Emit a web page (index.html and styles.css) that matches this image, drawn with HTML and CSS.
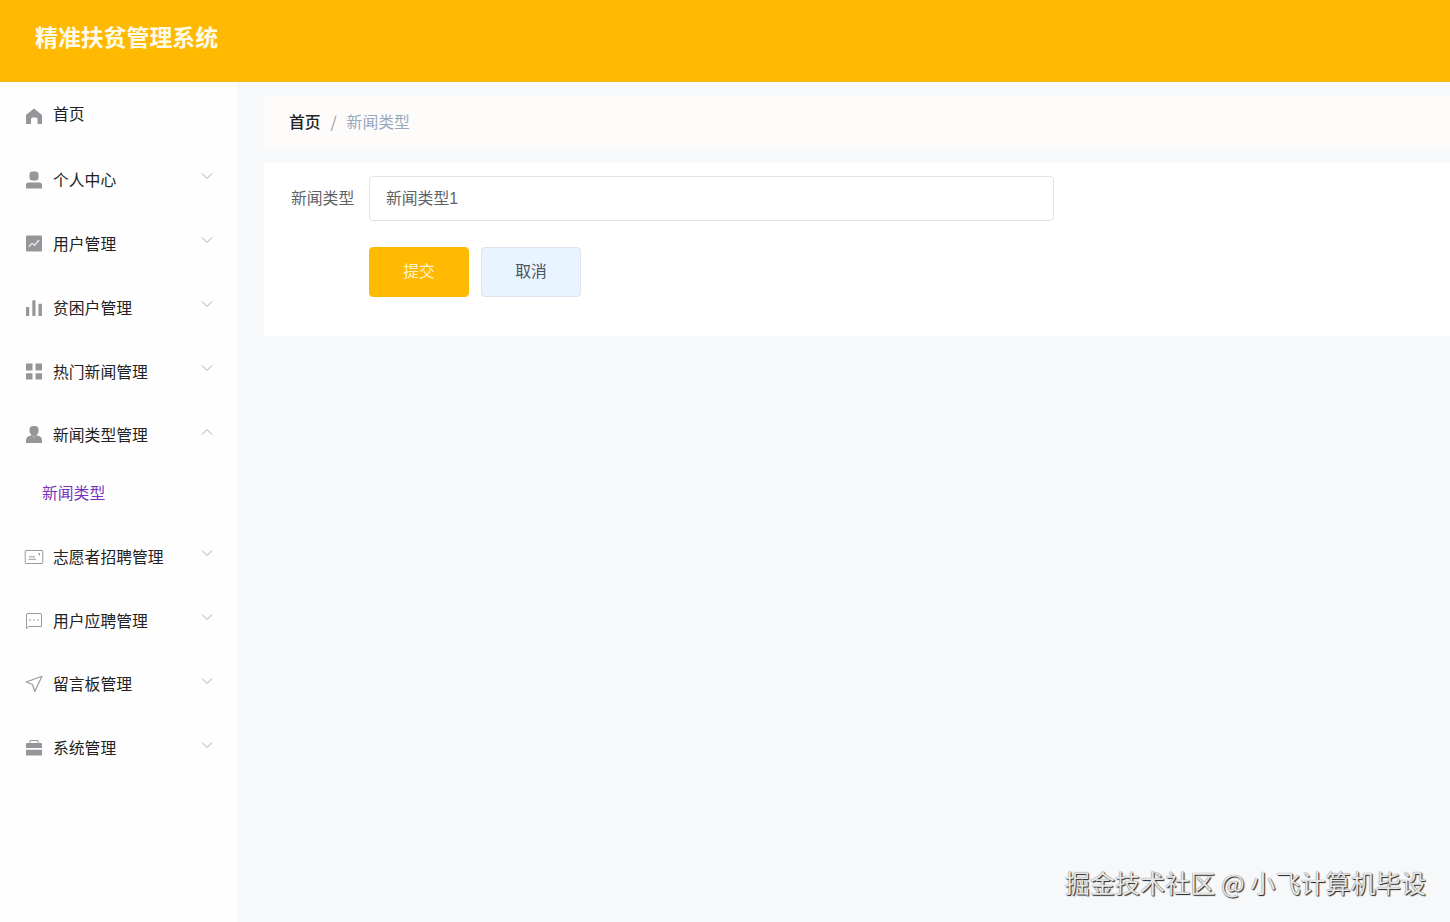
FILE: index.html
```html
<!DOCTYPE html>
<html lang="zh-CN">
<head>
<meta charset="utf-8">
<title>精准扶贫管理系统</title>
<link rel="stylesheet" href="styles.css">
</head>
<body>
<div class="app">
  <header class="topbar"><h1 class="brand">精准扶贫管理系统</h1></header>
  <div class="body">
    <nav class="sidebar">
      <div class="item home">
        <svg class="icon" viewBox="0 0 20 20"><path class="fill" d="M10 2.500 18 9V18H13.500V13Q13.500 11.500 12 11.500H8.500Q7 11.500 7 13V18H2V9Z"/></svg>
        <span class="label">首页</span>
      </div>
      <div class="item">
        <svg class="icon" viewBox="0 0 20 20"><rect class="fill" x="5.500" y="1.500" width="9" height="9" rx="3"/><path class="fill" d="M2 18.500V15Q2 12.500 4.500 12.500H15.500Q18 12.500 18 15V18.500Z"/></svg>
        <span class="label">个人中心</span>
        <svg class="arrow" viewBox="0 0 12 8"><path d="M1 1.500 6 6.500 11 1.500"/></svg>
      </div>
      <div class="item">
        <svg class="icon" viewBox="0 0 20 20"><rect class="fill" x="2" y="1.500" width="16" height="16" rx="1"/><path class="cut" d="M4.800 12.800 8 9.300 10.500 11.300 15.200 6"/></svg>
        <span class="label">用户管理</span>
        <svg class="arrow" viewBox="0 0 12 8"><path d="M1 1.500 6 6.500 11 1.500"/></svg>
      </div>
      <div class="item">
        <svg class="icon" viewBox="0 0 20 20"><rect class="fill" x="2" y="9" width="3.200" height="9" rx=".5"/><rect class="fill" x="8.300" y="2.200" width="3.200" height="15.800" rx=".5"/><rect class="fill" x="14.500" y="5.800" width="3.400" height="12.200" rx=".5"/></svg>
        <span class="label">贫困户管理</span>
        <svg class="arrow" viewBox="0 0 12 8"><path d="M1 1.500 6 6.500 11 1.500"/></svg>
      </div>
      <div class="item">
        <svg class="icon" viewBox="0 0 20 20"><path class="fill" d="M2 1.500H8.500V8.500H2ZM11.500 1.500H18V8.500H11.500ZM2 11.200H8.500V17.500H2ZM11.500 11.200H18V17.500H11.500Z"/></svg>
        <span class="label">热门新闻管理</span>
        <svg class="arrow" viewBox="0 0 12 8"><path d="M1 1.500 6 6.500 11 1.500"/></svg>
      </div>
      <div class="item">
        <svg class="icon" viewBox="0 0 20 20"><rect class="fill" x="5.500" y="1" width="9" height="8.500" rx="3.500"/><path class="fill" d="M7 9H13V10.500L16 11.500Q18 12.500 18 15V18H2V15Q2 12.500 4 11.500L7 10.500Z"/><path class="notch" d="M8 10.500 10 12.500 12 10.500"/></svg>
        <span class="label">新闻类型管理</span>
        <svg class="arrow" viewBox="0 0 12 8"><path d="M1 6.500 6 1.500 11 6.500"/></svg>
      </div>
      <div class="submenu">新闻类型</div>
      <div class="item">
        <svg class="icon" viewBox="0 0 20 20"><rect class="line" x="1.200" y="3.500" width="17.600" height="13" rx=".6"/><path class="line" d="M5 9.800H11M4.500 12.300H12M14 6.500H15.500V8.500"/></svg>
        <span class="label">志愿者招聘管理</span>
        <svg class="arrow" viewBox="0 0 12 8"><path d="M1 1.500 6 6.500 11 1.500"/></svg>
      </div>
      <div class="item">
        <svg class="icon" viewBox="0 0 20 20"><path class="line" d="M2.500 17.500V4Q2.500 2.500 4 2.500H16Q17.500 2.500 17.500 4V15.500H5Z"/><path class="line" d="M5 9H7M9 9H11M13 9H15"/></svg>
        <span class="label">用户应聘管理</span>
        <svg class="arrow" viewBox="0 0 12 8"><path d="M1 1.500 6 6.500 11 1.500"/></svg>
      </div>
      <div class="item">
        <svg class="icon" viewBox="0 0 20 20"><path class="line plane" d="M18 2.200 2.200 8 8.500 10.500 10.800 17.500Z"/></svg>
        <span class="label">留言板管理</span>
        <svg class="arrow" viewBox="0 0 12 8"><path d="M1 1.500 6 6.500 11 1.500"/></svg>
      </div>
      <div class="item">
        <svg class="icon" viewBox="0 0 20 20"><path class="line" d="M6 5V2.500H14V5"/><path class="fill" d="M3 5H17Q18 5 18 6V10H2V6Q2 5 3 5ZM2 11.700H18V17.500H2Z"/></svg>
        <span class="label">系统管理</span>
        <svg class="arrow" viewBox="0 0 12 8"><path d="M1 1.500 6 6.500 11 1.500"/></svg>
      </div>
    </nav>
    <main class="content">
      <div class="crumbs"><span class="root">首页</span><span class="slash">/</span><span class="current">新闻类型</span></div>
      <form class="panel">
        <div class="field"><label class="name" for="type">新闻类型</label><input class="input" id="type" type="text" value="新闻类型1"></div>
        <div class="actions"><button class="btn primary" type="button">提交</button><button class="btn cancel" type="button">取消</button></div>
      </form>
    </main>
  </div>
</div>
<div class="watermark">掘金技术社区 @ 小飞计算机毕设</div>
</body>
</html>
```
FILE: styles.css
```css
* { box-sizing: border-box; }
body {
  margin: 0;
  overflow: hidden;
  font-family: "Noto Sans CJK SC", "Liberation Sans", sans-serif;
  font-size: 15.8px;
  color: #222;
  background: #f7f8fa;
}
.app { display: flex; flex-direction: column; height: 922px; }
.topbar {
  flex: none;
  display: flex;
  align-items: center;
  height: 82px;
  padding: 0 35px 9px;
  background: #ffb900;
  border-bottom: 1px solid #f3bb22;
}
.brand { margin: 0; font-size: 22.9px; line-height: 32px; font-weight: 700; color: #fffbe9; }
.body { flex: 1; display: flex; min-height: 0; }
.sidebar { flex: none; width: 237px; padding-top: 2px; background: #fefefe; }
.item { display: flex; align-items: center; height: 63.9px; padding: 0 24px 0 24px; }
.icon { flex: none; width: 20px; height: 20px; }
.label { flex: 1; margin-left: 9px; line-height: 24px; white-space: nowrap; }
.home .label { padding-bottom: 3px; }
.arrow { width: 12px; height: 8px; margin-bottom: 7px; fill: none; stroke: #aaa; stroke-width: 1; }
.fill { fill: #949699; }
.cut { fill: none; stroke: #e8e8e9; stroke-width: 1.3; }
.notch { fill: none; stroke: #c5c6c8; stroke-width: 1; }
.line { fill: none; stroke: #999b9e; stroke-width: 1; }
.plane { stroke-width: 1.2; stroke-linejoin: round; }
.submenu { height: 57.4px; padding-left: 42px; line-height: 52px; color: #7a32bd; }
.content { flex: 1; min-width: 0; padding: 14px 0 0 27px; }
.crumbs {
  display: flex;
  align-items: center;
  height: 53px;
  padding: 0 25px 2px;
  background: #fefcfb;
}
.root { font-weight: 500; }
.slash { width: 26px; text-align: center; color: #999; }
.current { color: #97a8be; }
.panel { height: 173px; margin-top: 14px; padding: 13px 0 0 27px; background: #fff; }
.field { display: flex; align-items: center; }
.name { width: 78px; padding-bottom: 2px; color: #606266; }
.input {
  width: 685px;
  height: 45px;
  padding: 0 16px 2px;
  border: 1px solid #e1e3e8;
  border-radius: 4px;
  font: inherit;
  font-family: "Liberation Sans", "Noto Sans CJK SC", sans-serif;
  color: #606266;
  background: #fff;
}
.actions { display: flex; gap: 12px; padding: 26px 0 0 78px; }
.btn {
  width: 100px;
  height: 50px;
  padding: 0 0 4px;
  border: 1px solid #ffb900;
  border-radius: 4px;
  font: inherit;
}
.primary { color: #fff5cd; background: #ffb900; }
.cancel { color: #4c535d; background: #e8f4ff; border-color: #dbe3ee; }
.watermark {
  position: absolute;
  right: 24px;
  bottom: 22px;
  font-size: 25.1px;
  line-height: 36px;
  white-space: nowrap;
  color: #e6e6e6;
  text-shadow: 1px 1px 1px #222, 0 0 1px #666;
}
```
